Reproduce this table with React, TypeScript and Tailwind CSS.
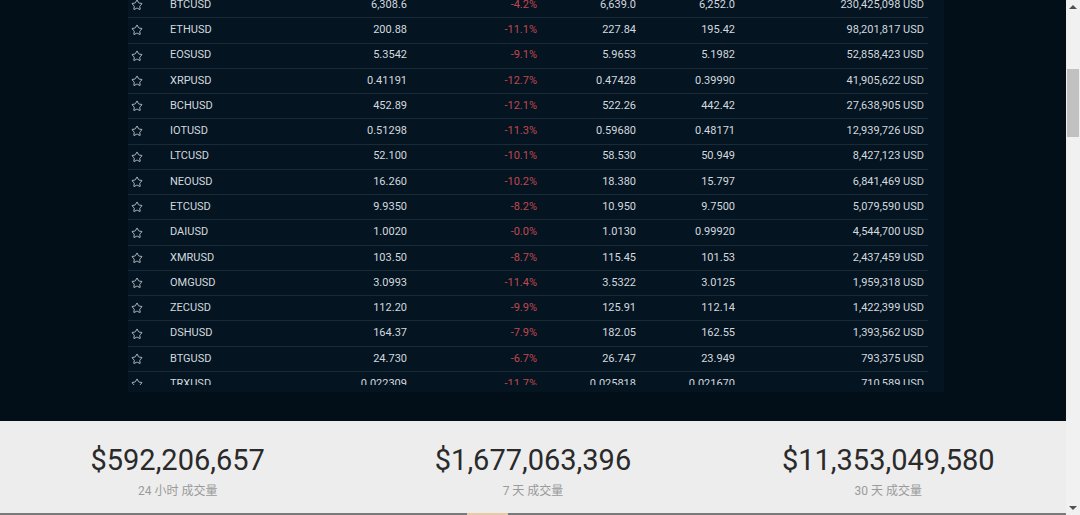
import { Star } from "lucide-react";

const rows = [
  ["BTCUSD", "6,308.6", "-4.2%", "6,639.0", "6,252.0", "230,425,098 USD"],
  ["ETHUSD", "200.88", "-11.1%", "227.84", "195.42", "98,201,817 USD"],
  ["EOSUSD", "5.3542", "-9.1%", "5.9653", "5.1982", "52,858,423 USD"],
  ["XRPUSD", "0.41191", "-12.7%", "0.47428", "0.39990", "41,905,622 USD"],
  ["BCHUSD", "452.89", "-12.1%", "522.26", "442.42", "27,638,905 USD"],
  ["IOTUSD", "0.51298", "-11.3%", "0.59680", "0.48171", "12,939,726 USD"],
  ["LTCUSD", "52.100", "-10.1%", "58.530", "50.949", "8,427,123 USD"],
  ["NEOUSD", "16.260", "-10.2%", "18.380", "15.797", "6,841,469 USD"],
  ["ETCUSD", "9.9350", "-8.2%", "10.950", "9.7500", "5,079,590 USD"],
  ["DAIUSD", "1.0020", "-0.0%", "1.0130", "0.99920", "4,544,700 USD"],
  ["XMRUSD", "103.50", "-8.7%", "115.45", "101.53", "2,437,459 USD"],
  ["OMGUSD", "3.0993", "-11.4%", "3.5322", "3.0125", "1,959,318 USD"],
  ["ZECUSD", "112.20", "-9.9%", "125.91", "112.14", "1,422,399 USD"],
  ["DSHUSD", "164.37", "-7.9%", "182.05", "162.55", "1,393,562 USD"],
  ["BTGUSD", "24.730", "-6.7%", "26.747", "23.949", "793,375 USD"],
  ["TRXUSD", "0.022309", "-11.7%", "0.025818", "0.021670", "710,589 USD"],
];

const stats = [
  ["$592,206,657", "24 小时 成交量"],
  ["$1,677,063,396", "7 天 成交量"],
  ["$11,353,049,580", "30 天 成交量"],
];

const font = { fontFamily: "Roboto, 'Noto Sans CJK SC', sans-serif" };

export default function App() {
  return (
    <div className="flex w-[1080px] h-[515px] overflow-hidden" style={font}>
      <div className="flex flex-col w-[1066px]">
        <div className="h-[421px] bg-[#020e18] overflow-hidden">
          <div className="ml-[128px] w-[816px] h-[399px] mt-[-7px] bg-[#041421] pb-[7px]">
            <div className="h-[392px] overflow-hidden">
              {rows.map((r) => (
                <div
                  key={r[0]}
                  className="flex items-center w-[800px] h-[25.27px] border-b border-[#1b2a37] text-[11px] text-[#d3d9df]"
                >
                  <div className="w-[42px] pl-[3px]">
                    <Star size={12} strokeWidth={1.7} className="text-[#d0d6dc]" />
                  </div>
                  <div className="w-[120px]">{r[0]}</div>
                  <div className="w-[117px] text-right">{r[1]}</div>
                  <div className="w-[130px] text-right text-[#c1474f]">{r[2]}</div>
                  <div className="w-[99px] text-right">{r[3]}</div>
                  <div className="w-[99px] text-right">{r[4]}</div>
                  <div className="w-[189px] text-right">{r[5]}</div>
                </div>
              ))}
            </div>
          </div>
        </div>
        <div className="flex-1 bg-[#ededed] grid grid-cols-3 pt-[21px]">
          {stats.map((s) => (
            <div key={s[1]} className="flex flex-col items-center">
              <div className="text-[29px] leading-[36px] text-[#2a2a2a]">{s[0]}</div>
              <div className="text-[12px] leading-[16px] mt-[5px] text-[#9a9a9a]">{s[1]}</div>
            </div>
          ))}
        </div>
        <div className="h-[2px] bg-[#7a7a7a] flex">
          <div className="ml-[467px] w-[41px] bg-[#e8c9a8]" />
        </div>
      </div>
      <div className="w-[14px] bg-[#f1f1f1] flex flex-col items-center">
        <div className="h-[14px] flex items-center justify-center">
          <div className="w-0 h-0 border-l-[4px] border-r-[4px] border-b-[4px] border-l-transparent border-r-transparent border-b-[#505050]" />
        </div>
        <div className="mt-[55px] w-[12px] h-[68px] bg-[#c1c1c1]" />
        <div className="flex-1" />
        <div className="h-[14px] flex items-center justify-center">
          <div className="w-0 h-0 border-l-[4px] border-r-[4px] border-t-[4px] border-l-transparent border-r-transparent border-t-[#505050]" />
        </div>
      </div>
    </div>
  );
}
